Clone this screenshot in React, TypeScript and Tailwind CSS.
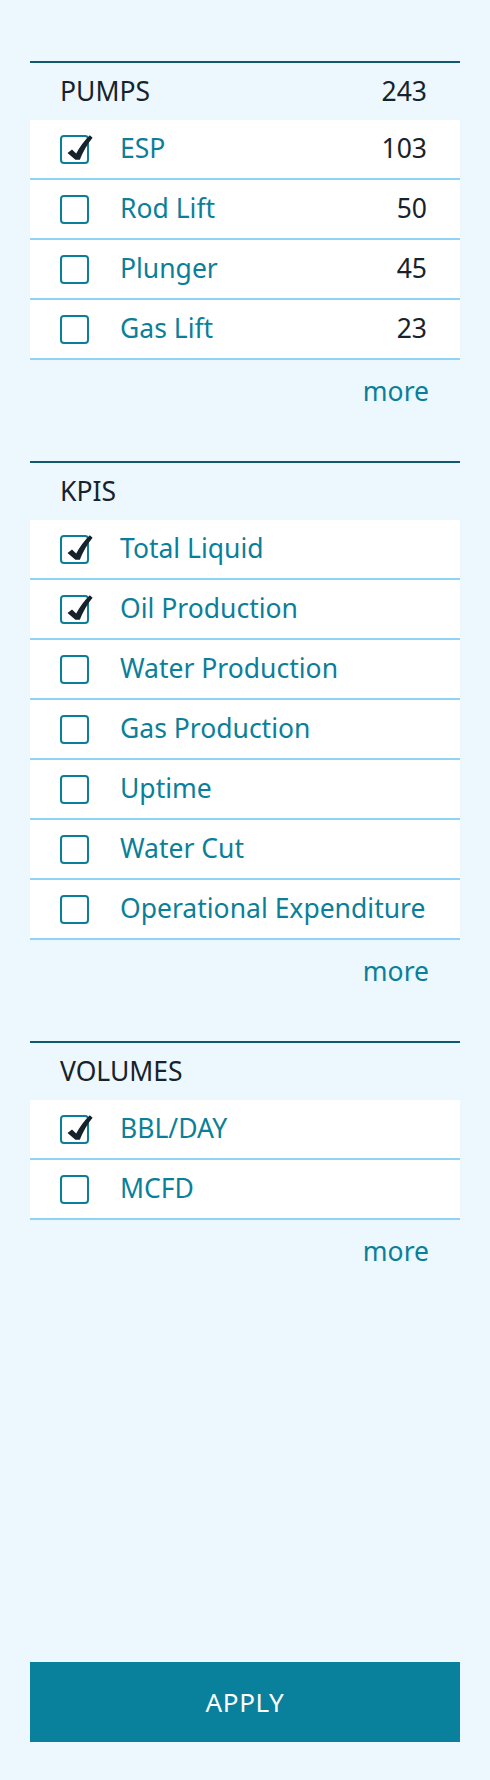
import React from 'react';

type Option = { label: string; count?: number; checked: boolean };

const sections: { title: string; total?: number; options: Option[] }[] = [
  {
    title: 'PUMPS',
    total: 243,
    options: [
      { label: 'ESP', count: 103, checked: true },
      { label: 'Rod Lift', count: 50, checked: false },
      { label: 'Plunger', count: 45, checked: false },
      { label: 'Gas Lift', count: 23, checked: false },
    ],
  },
  {
    title: 'KPIS',
    options: [
      { label: 'Total Liquid', checked: true },
      { label: 'Oil Production', checked: true },
      { label: 'Water Production', checked: false },
      { label: 'Gas Production', checked: false },
      { label: 'Uptime', checked: false },
      { label: 'Water Cut', checked: false },
      { label: 'Operational Expenditure', checked: false },
    ],
  },
  {
    title: 'VOLUMES',
    options: [
      { label: 'BBL/DAY', checked: true },
      { label: 'MCFD', checked: false },
    ],
  },
];

function Checkbox({ checked }: { checked: boolean }) {
  return (
    <span className="relative block w-[29px] h-[29px] border-2 border-[#0b7f99] rounded-[4px] bg-white shrink-0">
      {checked && (
        <svg
          className="absolute left-0 top-0 overflow-visible"
          width="29"
          height="29"
          viewBox="0 0 29 29"
        >
          {/* heavy check that spills over the top edge */}
          <path
            d="M5.5 16 L10 12.4 L14.2 16.4 Q19.5 6.5 27.8 -1.8 L30.6 0.8 Q23 10 17.8 22.8 L13.4 22.8 Z"
            fill="#16222b"
          />
        </svg>
      )}
    </span>
  );
}

export default function App() {
  return (
    <div
      className="min-h-screen flex flex-col bg-[#edf8fe] px-[30px] pt-[61px] pb-[38px]"
      style={{ fontFamily: '"Noto Sans", "Open Sans", sans-serif' }}
    >
      {sections.map((section, i) => (
        <div key={section.title} className={i < sections.length - 1 ? 'mb-[37px]' : ''}>
          <div className="border-t-2 border-[#0d5a6c] h-[59px] flex items-center justify-between pl-[30px] pr-[33px] text-[26.5px] text-[#17232c]">
            <span>{section.title}</span>
            {section.total !== undefined && <span>{section.total}</span>}
          </div>
          {section.options.map((opt) => (
            <div
              key={opt.label}
              className="h-[60px] bg-white border-b-2 border-[#8fd4f6] flex items-center pl-[30px] pr-[33px]"
            >
              <Checkbox checked={opt.checked} />
              <span className="ml-[31px] flex-1 text-[26.5px] text-[#0b7f99] whitespace-nowrap">{opt.label}</span>
              {opt.count !== undefined && (
                <span className="text-[26.5px] text-[#17232c]">{opt.count}</span>
              )}
            </div>
          ))}
          <div className="h-[64px] flex items-center justify-end pr-[31px]">
            <button className="text-[26.5px] text-[#0b7f99]">more</button>
          </div>
        </div>
      ))}
      <div className="flex-1" />
      <button className="h-[80px] w-full bg-[#0a819c] text-white text-[26px] tracking-wide">APPLY</button>
    </div>
  );
}
